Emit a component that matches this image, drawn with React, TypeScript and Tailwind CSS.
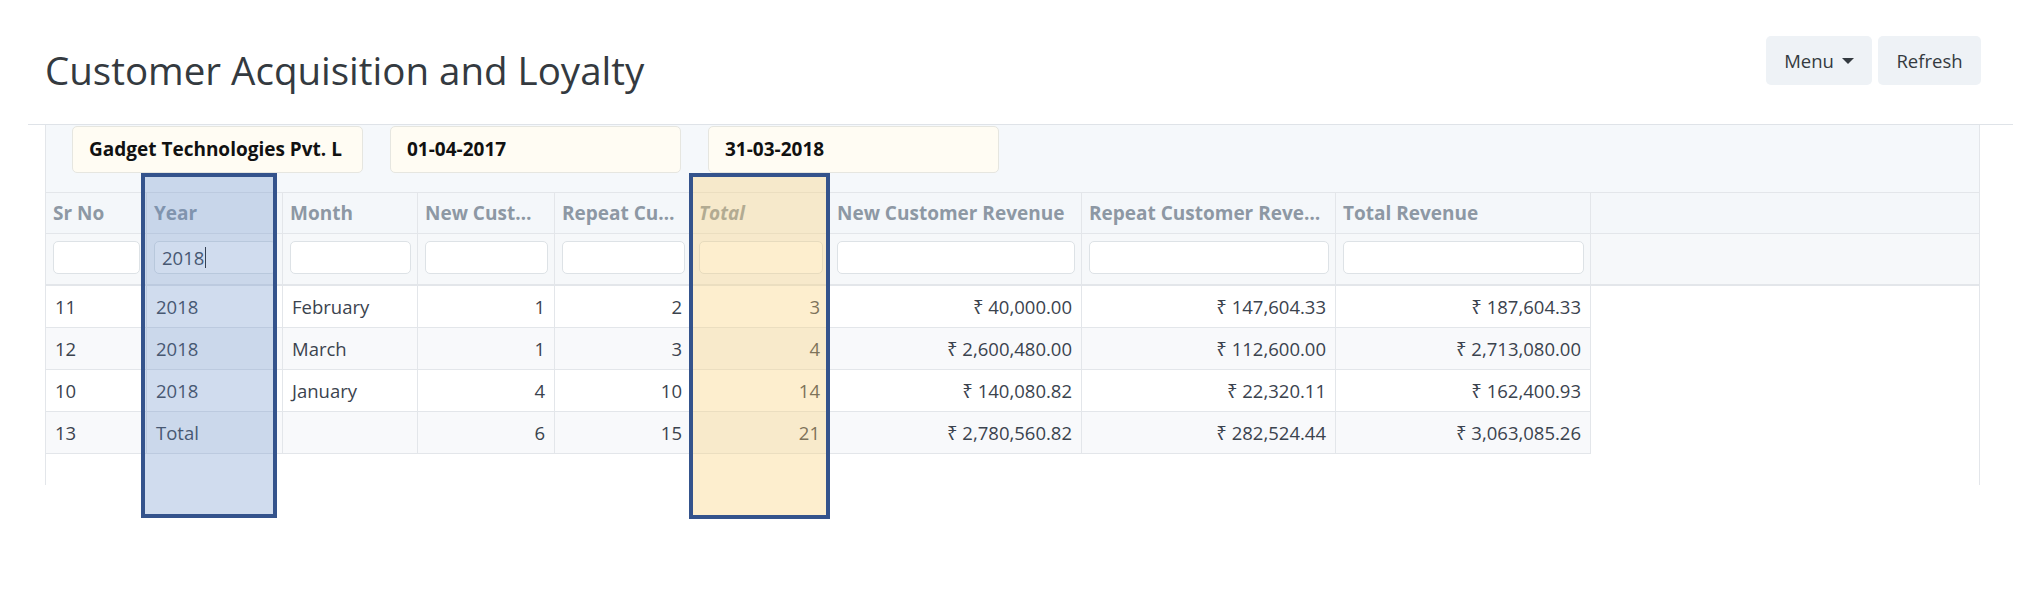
import React from "react";

interface Col {
  label: string;
  width: string;
  right: boolean;
  italic?: boolean;
}

const cols: Col[] = [
  { label: "Sr No", width: "w-[101px]", right: false },
  { label: "Year", width: "w-[136px]", right: false },
  { label: "Month", width: "w-[135px]", right: false },
  { label: "New Cust…", width: "w-[137px]", right: true },
  { label: "Repeat Cu…", width: "w-[137px]", right: true },
  { label: "Total", width: "w-[138px]", right: true, italic: true },
  { label: "New Customer Revenue", width: "w-[252px]", right: true },
  { label: "Repeat Customer Reve…", width: "w-[254px]", right: true },
  { label: "Total Revenue", width: "w-[255px]", right: true },
];

const rows = [
  ["11", "2018", "February", "1", "2", "3", "₹ 40,000.00", "₹ 147,604.33", "₹ 187,604.33"],
  ["12", "2018", "March", "1", "3", "4", "₹ 2,600,480.00", "₹ 112,600.00", "₹ 2,713,080.00"],
  ["10", "2018", "January", "4", "10", "14", "₹ 140,080.82", "₹ 22,320.11", "₹ 162,400.93"],
  ["13", "Total", "", "6", "15", "21", "₹ 2,780,560.82", "₹ 282,524.44", "₹ 3,063,085.26"],
];

export default function App() {
  return (
    <div className="relative w-full h-[598px] bg-white overflow-hidden font-['Open_Sans','Noto_Sans',sans-serif]">
      {/* Header */}
      <div className="flex justify-between h-[125px] ml-[28px] mr-[13px] border-b border-[#dfe3e8]">
        <h1 className="ml-[17px] mt-[46px] text-[38.5px] leading-[48px] font-normal text-[#343a40]">
          Customer Acquisition and Loyalty
        </h1>
        <div className="flex gap-[6px] mt-[36px] mr-[32px] h-[49px]">
          <button className="w-[106px] h-[49px] rounded-[5px] bg-[#eef2f6] text-[18.5px] text-[#343a40] flex items-center justify-center gap-[8px]">
            Menu
            <span className="w-0 h-0 border-x-[6px] border-t-[6px] border-x-transparent border-t-[#343a40]" />
          </button>
          <button className="w-[103px] h-[49px] rounded-[5px] bg-[#eef2f6] text-[18.5px] text-[#343a40] flex items-center justify-center">
            Refresh
          </button>
        </div>
      </div>

      {/* Panel */}
      <div className="ml-[45px] w-[1935px] h-[360px] border-x border-[#e3e6ea]">
        {/* Filters */}
        <div className="h-[68px] bg-[#f5f8fb] border-b border-[#e3e6ea] flex gap-[27px] pl-[26px] pt-[1px]">
          {["Gadget Technologies Pvt. L", "01-04-2017", "31-03-2018"].map((f) => (
            <div
              key={f}
              className="w-[291px] h-[47px] bg-[#fffcf3] border border-[#e6e6e0] rounded-[5px] pl-[16px] flex items-center text-[19px] font-bold text-[#111]"
            >
              {f}
            </div>
          ))}
        </div>

        {/* Column headers */}
        <div className="flex h-[41px] bg-[#f4f7fa] border-b border-[#e3e6ea]">
          {cols.map((c) => (
            <div
              key={c.label}
              className={`${c.width} shrink-0 border-r border-[#e3e6ea] px-[7px] flex items-center text-[19px] font-bold text-[#8d98a4] whitespace-nowrap overflow-hidden ${c.italic ? "italic" : ""}`}
            >
              {c.label}
            </div>
          ))}
          <div className="flex-1" />
        </div>

        {/* Filter inputs */}
        <div className="flex h-[52px] bg-[#f6f8fa] border-b-2 border-[#e3e6ea]">
          {cols.map((c, i) => (
            <div key={c.label} className={`${c.width} shrink-0 border-r border-[#e3e6ea] pl-[7px] pr-[6px] pt-[7px]`}>
              <div className="h-[33px] rounded-[5px] border border-[#dde2e6] bg-white flex items-center pl-[7px] text-[18.5px] text-[#3b434e]">
                {i === 1 && (
                  <>
                    2018
                    <span className="ml-[1px] w-[1px] h-[21px] bg-[#222]" />
                  </>
                )}
              </div>
            </div>
          ))}
          <div className="flex-1" />
        </div>

        {/* Data rows */}
        {rows.map((r, ri) => (
          <div
            key={r[0]}
            className={`flex w-[1545px] h-[42px] border-b border-[#e3e6ea] ${ri % 2 === 1 ? "bg-[#f8f9fb]" : "bg-white"}`}
          >
            {r.map((v, ci) => (
              <div
                key={ci}
                className={`${cols[ci].width} shrink-0 border-r border-[#e3e6ea] px-[9px] flex items-center text-[18.5px] text-[#3b434e] whitespace-nowrap ${cols[ci].right ? "justify-end" : ""}`}
              >
                {v}
              </div>
            ))}
          </div>
        ))}
      </div>

      {/* Highlight annotations */}
      <div className="absolute left-[141px] top-[173px] w-[136px] h-[345px] border-4 border-[#34538c] bg-[rgba(100,140,200,0.3)] pointer-events-none" />
      <div className="absolute left-[689px] top-[173px] w-[141px] h-[346px] border-4 border-[#34538c] bg-[rgba(250,205,115,0.35)] pointer-events-none" />
    </div>
  );
}
